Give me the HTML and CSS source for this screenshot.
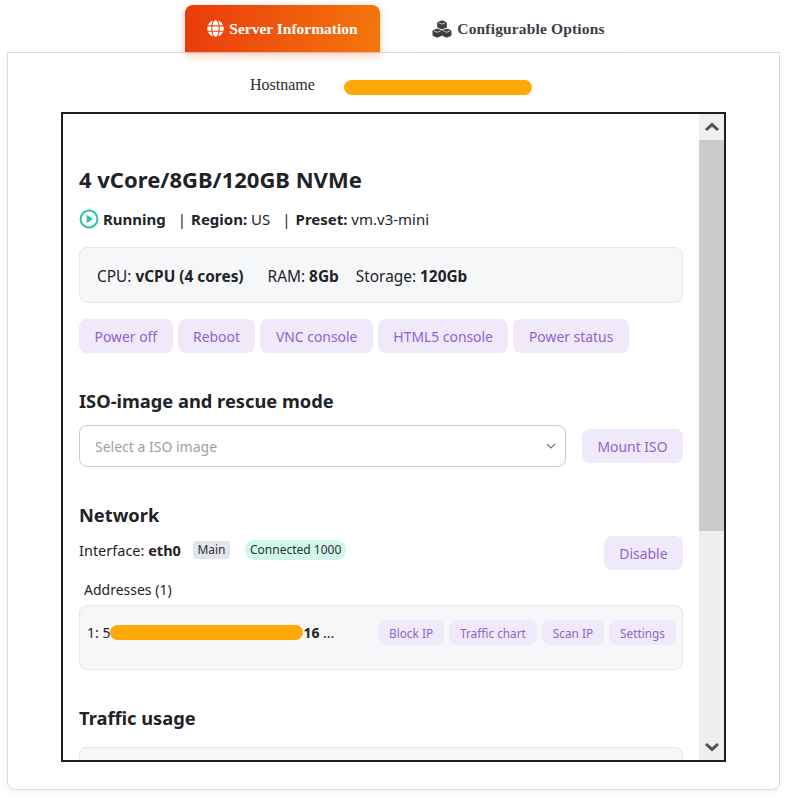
FILE: index.html
```html
<!DOCTYPE html>
<html lang="en">
<head>
<meta charset="utf-8">
<title>Server Information</title>
<link rel="stylesheet" href="styles.css">
</head>
<body>
<nav class="tabs">
  <a class="tab tab-active">
    <svg class="tab-icon" viewBox="0 0 496 512"><path fill="currentColor" d="M336.5 160C322 70.7 287.8 8 248 8s-74 62.7-88.5 152h177zM152 256c0 22.2 1.2 43.5 3.3 64h185.3c2.1-20.5 3.3-41.8 3.3-64s-1.2-43.5-3.3-64H155.3c-2.1 20.5-3.3 41.8-3.3 64zm324.7-96c-28.6-67.9-86.5-120.4-158-141.6 24.4 33.8 41.2 84.7 50 141.6h108zM177.2 18.4C105.8 39.6 47.8 92.1 19.3 160h108c8.7-56.9 25.5-107.8 49.9-141.6zM487.4 192H372.7c2.1 21 3.3 42.5 3.3 64s-1.2 43-3.3 64h114.6c5.5-20.5 8.6-41.8 8.6-64s-3.1-43.5-8.5-64zM120 256c0-21.5 1.2-43 3.3-64H8.6C3.2 212.5 0 233.8 0 256s3.2 43.5 8.6 64h114.6c-2-21-3.2-42.5-3.2-64zm39.5 96c14.5 89.3 48.7 152 88.5 152s74-62.7 88.5-152h-177zm159.3 141.6c71.4-21.2 129.4-73.7 158-141.6h-108c-8.8 56.9-25.6 107.8-50 141.6zM19.3 352c28.6 67.9 86.5 120.4 158 141.6-24.4-33.8-41.2-84.7-50-141.6h-108z"/></svg>
    Server Information
  </a>
  <a class="tab tab-plain">
    <svg class="tab-icon tab-icon-wide" viewBox="0 0 24 22"><g fill="currentColor" stroke="currentColor" stroke-width="1.2" stroke-linejoin="round"><path d="M12 1l5.2 2.1v5.8L12 11 6.8 8.9V3.1z"/><path d="M6.2 11l5.2 2.1v5.8L6.2 21 1 18.9v-5.8z"/><path d="M17.8 11l5.2 2.1v5.8L17.8 21l-5.2-2.1v-5.8z"/></g><g fill="none" stroke="#fff" stroke-width=".8"><path d="M8 3.4L12 5l4-1.6M2.2 13.4l4 1.6 4-1.6M13.8 13.4l4 1.6 4-1.6"/></g></svg>
    Configurable Options
  </a>
</nav>
<main class="card">
  <div class="host-row">
    <span class="host-label">Hostname</span>
    <span class="host-value"><span class="redact redact-host"></span></span>
  </div>
  <section class="frame">
    <div class="frame-body">
      <h1 class="title">4 vCore/8GB/120GB NVMe</h1>
      <p class="status">
        <svg class="play" viewBox="0 0 20 20"><circle cx="10" cy="10" r="8.4" fill="none" stroke="#2ec4a0" stroke-width="2"/><path d="M7.6 5.8l6.4 4.2-6.4 4.2z" fill="#2ec4a0"/></svg>
        <b>Running</b><span class="sep">|</span><b>Region:</b>&nbsp;US<span class="sep">|</span><b>Preset:</b>&nbsp;vm.v3-mini
      </p>
      <div class="specs">
        <span>CPU: <b>vCPU (4 cores)</b></span>
        <span>RAM: <b>8Gb</b></span>
        <span>Storage: <b>120Gb</b></span>
      </div>
      <div class="actions">
        <button class="btn">Power off</button>
        <button class="btn">Reboot</button>
        <button class="btn">VNC console</button>
        <button class="btn">HTML5 console</button>
        <button class="btn">Power status</button>
      </div>
      <h2 class="heading heading-iso">ISO-image and rescue mode</h2>
      <div class="iso-row">
        <div class="select">
          <span>Select a ISO image</span>
          <svg class="caret" viewBox="0 0 10 6"><path d="M1 1l4 4 4-4" fill="none" stroke="#6b7280" stroke-width="1.2"/></svg>
        </div>
        <button class="btn">Mount ISO</button>
      </div>
      <h2 class="heading heading-net">Network</h2>
      <div class="iface-row">
        <div class="iface">
          <span>Interface: <b>eth0</b></span>
          <span class="badge badge-grey">Main</span>
          <span class="badge badge-green">Connected 1000</span>
        </div>
        <button class="btn">Disable</button>
      </div>
      <p class="addr-label">Addresses (1)</p>
      <div class="addr">
        <span class="addr-text">1: 5<span class="addr-hidden"><span class="redact redact-addr"></span></span><b>16</b> ...</span>
        <div class="addr-actions">
          <button class="btn btn-sm">Block IP</button>
          <button class="btn btn-sm">Traffic chart</button>
          <button class="btn btn-sm">Scan IP</button>
          <button class="btn btn-sm">Settings</button>
        </div>
      </div>
      <h2 class="heading heading-traffic">Traffic usage</h2>
      <div class="traffic"></div>
    </div>
    <div class="scrollbar">
      <div class="sb-btn"><svg viewBox="0 0 16 10"><path d="M2 8l6-5.4L14 8" fill="none" stroke="#505050" stroke-width="3"/></svg></div>
      <div class="sb-thumb"></div>
      <div class="sb-track"></div>
      <div class="sb-btn"><svg viewBox="0 0 16 10"><path d="M2 2l6 5.4L14 2" fill="none" stroke="#505050" stroke-width="3"/></svg></div>
    </div>
  </section>
</main>
</body>
</html>
```
FILE: styles.css
```css
* { box-sizing: border-box; }
html, body { margin: 0; padding: 0; background: #fff; }
body { width: 799px; height: 807px; overflow: hidden; padding: 5px 19px 0 7px; font-family: "Noto Sans", "Open Sans", sans-serif; color: #1f2328; }

.tabs { display: flex; height: 47px; padding-left: 178px; gap: 32px; position: relative; z-index: 1; }
.tab { display: flex; align-items: center; justify-content: center; gap: 5px; font-family: "Liberation Serif", serif; font-weight: 700; font-size: 15.5px; border-radius: 8px 8px 0 0; }
.tab-active { width: 195px; color: #fff; background: linear-gradient(100deg, #ea3a0c, #f4770c); box-shadow: 0 3px 9px rgba(240, 90, 20, .35); }
.tab-plain { width: 213px; color: #3d3f44; background: #fff; letter-spacing: .15px; }
.tab-icon { width: 17px; height: 17px; }
.tab-icon-wide { width: 20px; height: 18px; }

.card { height: 738px; border: 1px solid #dcdcdc; border-radius: 0 0 8px 8px; background: #fff; box-shadow: 0 2px 8px rgba(0, 0, 0, .06); }
.host-row { display: flex; align-items: center; height: 59px; padding: 10px 0 5px 242px; }
.host-label { width: 94px; font-family: "Liberation Serif", serif; font-size: 16px; color: #2b2d31; }
.host-value { display: block; width: 188px; height: 15px; margin-top: 4px; }
.redact { display: block; background: #ffa908; border-radius: 8px; }
.redact-host { width: 188px; height: 15px; }

.frame { display: flex; width: 665px; height: 650px; margin-left: 53px; border: 2px solid #1c1f23; overflow: hidden; }
.frame-body { flex: 1; min-width: 0; padding: 0 16px; overflow: hidden; }
.title { margin: 49px 0 0; font-size: 22px; line-height: 32px; font-weight: 700; }
.status { display: flex; align-items: center; margin: 12px 0 0; font-size: 15px; line-height: 24px; }
.status b { font-weight: 700; }
.play { width: 20px; height: 20px; margin: 0 4px 0 0; flex: none; }
.sep { margin: 0 5px 0 12px; }
.specs { display: flex; align-items: center; gap: 24px; height: 56px; margin-top: 16px; padding-left: 17px; padding-top: 2px; font-size: 15.4px; background: #f6f7f9; border: 1px solid #e5e7eb; border-radius: 8px; }
.specs span + span + span { margin-left: -7px; }
.actions { display: flex; gap: 5px; margin-top: 16px; }
.btn { height: 34px; padding: 0 15.5px; border: 0; border-radius: 8px; background: #f0e9fa; color: #9163cf; font-family: inherit; font-size: 13.9px; flex: none; }
.btn-sm { height: 25px; padding: 0 11px; font-size: 11.8px; }
.heading { margin: 0; font-size: 18.3px; line-height: 28px; font-weight: 700; }
.heading-iso { margin-top: 34px; }
.iso-row { display: flex; align-items: center; justify-content: space-between; margin-top: 10px; }
.select { display: flex; align-items: center; justify-content: space-between; width: 487px; height: 42px; padding: 0 9px 0 15px; border: 1px solid #c9cdd3; border-radius: 8px; font-size: 14px; color: #9aa1ab; }
.caret { width: 10px; height: 6px; }
.heading-net { margin-top: 34px; }
.iface-row { display: flex; align-items: center; justify-content: space-between; margin-top: 7px; }
.iface { display: flex; align-items: center; font-size: 14.5px; margin-top: -6px; }
.iface b { font-weight: 700; }
.badge { font-size: 12px; line-height: 18px; margin-left: 12px; color: #2b3036; }
.badge-grey { padding: 0 4.5px; background: #e3e5e9; border-radius: 4px; }
.badge-green { margin-left: 15px; padding: 1px 5px; background: #d1f7ea; border-radius: 9px; }
.addr-label { margin: 9px 0 0 5px; font-size: 14px; line-height: 22px; }
.addr { display: flex; align-items: flex-start; justify-content: space-between; height: 65px; margin-top: 4px; padding: 14px 6px 0 7px; background: #f6f7f9; border: 1px solid #e5e7eb; border-radius: 8px; }
.addr-text { display: flex; align-items: center; gap: 0; font-size: 14px; line-height: 25px; white-space: pre; }
.addr-text b { font-weight: 700; }
.addr-hidden { position: relative; display: inline-block; width: 193px; height: 15px; }
.redact-addr { position: absolute; left: 0; top: 0; width: 193px; height: 15px; }
.addr-actions { display: flex; gap: 5px; }
.heading-traffic { margin-top: 34px; }
.traffic { height: 80px; margin-top: 15px; background: #f6f7f9; border: 1px solid #e5e7eb; border-radius: 8px; }

.scrollbar { display: flex; flex-direction: column; width: 25px; flex: none; background: #efefef; }
.sb-btn { display: flex; align-items: center; justify-content: center; height: 26px; flex: none; }
.sb-btn svg { width: 16px; height: 10px; }
.sb-thumb { height: 391px; background: #cbcbcb; flex: none; }
.sb-track { flex: 1; }
```
